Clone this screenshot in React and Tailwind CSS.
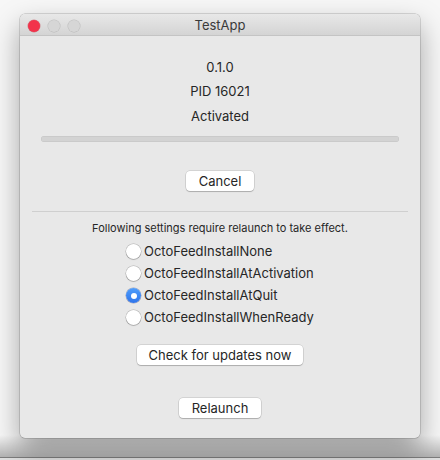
import React from "react";

function Btn({ children, w }) {
  return (
    <button
      className={`h-[20px] rounded-[4px] bg-white text-[13px] leading-[20px] text-[#262626] shadow-[0_0_0_0.5px_rgba(0,0,0,0.18),0_1px_1px_rgba(0,0,0,0.18)] ${w}`}
    >
      {children}
    </button>
  );
}

function Radio({ checked, label }) {
  return (
    <div className="flex h-[22px] items-center gap-[3px]">
      {checked ? (
        <span className="flex h-[15px] w-[15px] shrink-0 items-center justify-center rounded-full bg-gradient-to-b from-[#4f9dfb] to-[#2f74ea] shadow-[0_0_0_0.5px_rgba(0,0,60,0.3)]">
          <span className="h-[6px] w-[6px] rounded-full bg-white" />
        </span>
      ) : (
        <span className="h-[15px] w-[15px] shrink-0 rounded-full bg-white shadow-[0_0_0_0.5px_rgba(0,0,0,0.25),0_1px_1px_rgba(0,0,0,0.15)]" />
      )}
      <span className="whitespace-nowrap text-[13px] text-[#262626]">{label}</span>
    </div>
  );
}

export default function App() {
  return (
    <div
      className="relative h-[460px] w-[440px] overflow-hidden bg-[#f7f7f7] pl-[20px] pt-[14px]"
      style={{ fontFamily: "Inter, 'Liberation Sans', sans-serif" }}
    >
      <div className="absolute bottom-[3px] left-0 h-[22px] w-full bg-gradient-to-b from-[rgba(0,0,0,0)] to-[rgba(0,0,0,0.28)]" />
      <div className="absolute bottom-[2px] left-0 h-[1px] w-full bg-[#7d7d7d]" />
      <div className="absolute bottom-0 left-0 h-[2px] w-full bg-[#e0e0e0]" />
      <div className="relative flex h-[424px] w-[400px] flex-col overflow-hidden rounded-[5px] bg-[#e8e8e8] shadow-[0_0_0_0.5px_rgba(0,0,0,0.25),0_12px_28px_rgba(0,0,0,0.35)]">
        <div className="relative flex h-[22px] items-center justify-center border-b border-[#c4c4c4] bg-gradient-to-b from-[#e8e8e8] to-[#d4d4d4] pt-[2px]">
          <div className="absolute left-[8px] top-[6px] flex gap-[8px]">
            <span className="h-[12px] w-[12px] rounded-full bg-[#f2334b] shadow-[0_0_0_0.5px_rgba(180,0,20,0.4)]" />
            <span className="h-[12px] w-[12px] rounded-full bg-[#d6d6d6] shadow-[0_0_0_0.5px_rgba(0,0,0,0.15)]" />
            <span className="h-[12px] w-[12px] rounded-full bg-[#d6d6d6] shadow-[0_0_0_0.5px_rgba(0,0,0,0.15)]" />
          </div>
          <span className="text-[13px] text-[#3a3a3a]">TestApp</span>
        </div>
        <div className="flex flex-col items-center pt-[19px] text-[13px] text-[#262626]">
          <div className="h-[24px] leading-[24px]">0.1.0</div>
          <div className="h-[25px] leading-[25px]">PID 16021</div>
          <div className="h-[24px] leading-[24px]">Activated</div>
          <div className="mt-[8px] h-[6px] w-[358px] rounded-full bg-[#d3d3d3] shadow-[inset_0_0_0_0.5px_rgba(0,0,0,0.08)]" />
          <div className="mt-[29px]">
            <Btn w="w-[68px]">Cancel</Btn>
          </div>
          <div className="mt-[19px] h-[1px] w-[376px] bg-[#cfcfcf]" />
          <div className="mt-[8px] h-[16px] text-[11px] leading-[16px]">
            Following settings require relaunch to take effect.
          </div>
          <div className="mt-[5px] flex flex-col self-start pl-[106px]">
            <Radio label="OctoFeedInstallNone" />
            <Radio label="OctoFeedInstallAtActivation" />
            <Radio checked label="OctoFeedInstallAtQuit" />
            <Radio label="OctoFeedInstallWhenReady" />
          </div>
          <div className="mt-[16px]">
            <Btn w="w-[166px]">Check for updates now</Btn>
          </div>
          <div className="mt-[33px]">
            <Btn w="w-[82px]">Relaunch</Btn>
          </div>
        </div>
      </div>
    </div>
  );
}
